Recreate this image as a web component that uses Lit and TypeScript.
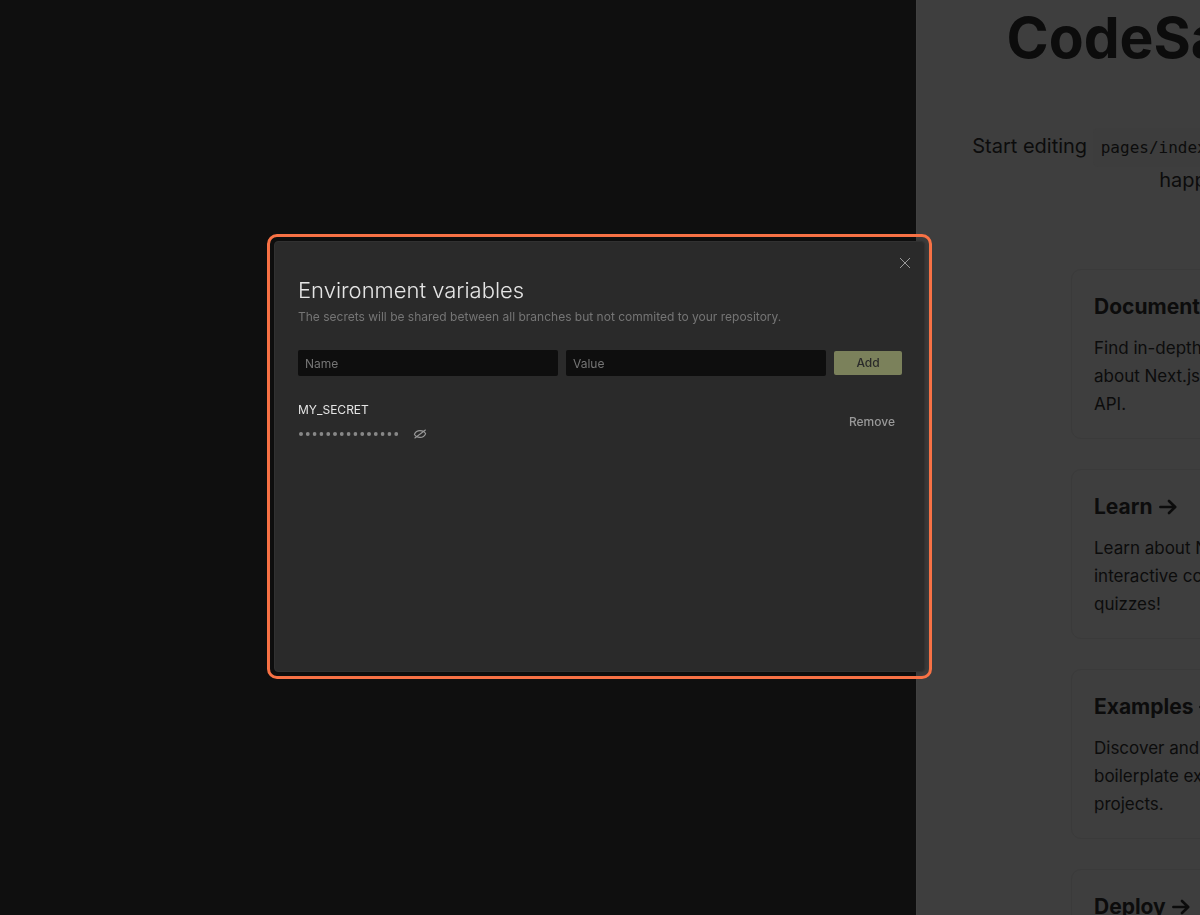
import { LitElement, html, css } from "lit";
import { customElement, state } from "lit/decorators.js";

const CARDS = [
  { title: "Documentation", text: "Find in-depth information about Next.js features and API." },
  { title: "Learn", text: "Learn about Next.js in an interactive course with quizzes!" },
  { title: "Examples", text: "Discover and deploy boilerplate example Next.js projects." },
  { title: "Deploy", text: "Instantly deploy your Next.js site to a public URL with Vercel." },
];

@customElement("preview-pane")
class PreviewPane extends LitElement {
  static styles = css`
    :host {
      display: block;
      overflow: hidden;
      background: #3e3e3e;
      color: #0c0c0c;
      border-left: 1px solid #414141;
      box-sizing: border-box;
      font-family: Inter, "Liberation Sans", sans-serif;
    }
    .content {
      min-width: 590px;
      box-sizing: border-box;
      padding: 4px 40px 0;
      display: flex;
      flex-direction: column;
      align-items: center;
    }
    h1 {
      margin: 0;
      font-size: 57px;
      line-height: 68px;
      font-weight: 700;
    }
    .lead {
      margin: 57px 0 60px;
      font-size: 20px;
      line-height: 34px;
      text-align: center;
      white-space: nowrap;
    }
    code {
      padding: 10px 8px;
      border-radius: 5px;
      background: #3d3d3d;
      font-family: "DejaVu Sans Mono", monospace;
      font-size: 16px;
      line-height: 20px;
    }
    .cards {
      display: flex;
      flex-direction: column;
      gap: 30px;
      padding-top: 12px;
    }
    .card {
      width: 282px;
      box-sizing: border-box;
      padding: 23px 22px 20px;
      border: 1px solid #3a3a3a;
      border-radius: 10px;
      color: inherit;
      text-decoration: none;
    }
    h2 {
      display: flex;
      align-items: center;
      gap: 6px;
      margin: 0 0 13px;
      font-size: 21px;
      line-height: 28px;
      font-weight: 700;
    }
    .arrow {
      width: 18px;
      height: 16px;
    }
    .card p {
      margin: 0;
      font-size: 17px;
      line-height: 28px;
    }
  `;

  render() {
    return html`
      <main class="content">
        <h1>CodeSandbox!</h1>
        <p class="lead">
          Start editing <code>pages/index.js</code> and make your magic<br />happening!
        </p>
        <div class="cards">
          ${CARDS.map(
            (card) => html`<a class="card" href="#">
              <h2>
                ${card.title}
                <svg class="arrow" viewBox="0 0 18 16" fill="none" stroke="currentColor" stroke-width="2.6" stroke-linecap="round" stroke-linejoin="round" aria-hidden="true">
                  <path d="M1.4 8H16M10 2L16.2 8L10 14" />
                </svg>
              </h2>
              <p>${card.text}</p>
            </a>`
          )}
        </div>
      </main>
    `;
  }
}

@customElement("env-dialog")
class EnvDialog extends LitElement {
  static styles = css`
    :host {
      display: block;
      width: 665px;
      max-width: 100%;
      box-sizing: border-box;
      padding: 4px;
      border: 3px solid #fa7346;
      border-radius: 10px;
      font-family: Inter, "Liberation Sans", sans-serif;
      font-size: 12px;
      line-height: 16px;
      color: #e5e5e5;
    }
    .dialog {
      position: relative;
      box-sizing: border-box;
      min-height: 431px;
      padding: 34px 22px 24px 23px;
      border: 1px solid #313131;
      border-radius: 4px;
      background: #2a2a2a;
      box-shadow: 0 0 6px rgba(0, 0, 0, 0.3);
    }
    button {
      font: inherit;
      border: 0;
      background: none;
      color: #999999;
      cursor: pointer;
    }
    .close {
      position: absolute;
      top: 11px;
      right: 9px;
      display: flex;
      padding: 4px;
    }
    .close svg {
      width: 12px;
      height: 12px;
    }
    h2 {
      margin: 0;
      font-size: 22px;
      line-height: 28px;
      font-weight: 300;
    }
    .hint {
      margin: 5px 0 25px;
      color: #757575;
    }
    form {
      display: grid;
      grid-template-columns: 1fr 1fr 68px;
      gap: 8px;
      align-items: center;
    }
    input {
      min-width: 0;
      height: 26px;
      box-sizing: border-box;
      padding: 0 7px;
      border: 0;
      border-radius: 2px;
      background: #0e0e0e;
      color: #e5e5e5;
      font: inherit;
    }
    input::placeholder {
      color: #757575;
      opacity: 1;
    }
    .add {
      height: 24px;
      padding: 0;
      border-radius: 2px;
      background: #7b815b;
      color: #2a2a2a;
      font-weight: 500;
    }
    .secret {
      display: flex;
      align-items: center;
      justify-content: space-between;
      margin-top: 26px;
    }
    .name {
      margin-bottom: 8px;
    }
    .value {
      display: flex;
      align-items: center;
      gap: 13px;
      height: 16px;
    }
    .dots {
      display: block;
      width: 102px;
      height: 6px;
      fill: #888888;
    }
    .toggle {
      display: flex;
      padding: 0;
    }
    .toggle svg {
      width: 14px;
      height: 12px;
    }
    .remove {
      padding: 4px 7px;
      font-weight: 500;
    }
  `;

  @state() private revealed = false;

  render() {
    return html`
      <section class="dialog" role="dialog" aria-labelledby="title">
        <button class="close" aria-label="Close">
          <svg viewBox="0 0 12 12" fill="none" stroke="currentColor" stroke-width="1" aria-hidden="true">
            <path d="M1 1L11 11M11 1L1 11" />
          </svg>
        </button>
        <h2 id="title">Environment variables</h2>
        <p class="hint">The secrets will be shared between all branches but not commited to your repository.</p>
        <form @submit=${(e: Event) => e.preventDefault()}>
          <input type="text" aria-label="Name" placeholder="Name" />
          <input type="text" aria-label="Value" placeholder="Value" />
          <button class="add" type="submit">Add</button>
        </form>
        <div class="secret">
          <div>
            <div class="name">MY_SECRET</div>
            <div class="value">
              <svg class="dots" viewBox="0 0 102 6" role="img" aria-label="Hidden value">
                ${Array.from({ length: 15 }, (_, i) => this.dot(3 + i * 6.8))}
              </svg>
              <button class="toggle" aria-label="Show value" @click=${() => (this.revealed = !this.revealed)}>
                <svg viewBox="0 0 14 12" fill="none" stroke="currentColor" stroke-width="1.1" stroke-linecap="round" aria-hidden="true">
                  <path d="M1.4 6.3C2.4 3.9 4.6 2.6 7 2.6S11.6 3.6 12.6 5.7C11.6 8.1 9.4 9.4 7 9.4S2.4 8.4 1.4 6.3Z" />
                  <path d="M1.9 10L12.4 2" />
                </svg>
              </button>
            </div>
          </div>
          <button class="remove">Remove</button>
        </div>
      </section>
    `;
  }

  private dot(x: number) {
    const size = 4;
    return html`<svg x=${x - size / 2} y="1" width=${size} height=${size} viewBox="0 0 4 4"><circle cx="2" cy="2" r="2" /></svg>`;
  }
}

@customElement("app-root")
class AppRoot extends LitElement {
  static styles = css`
    :host {
      display: block;
    }
    .workspace {
      display: grid;
      grid-template-columns: 916fr 284fr;
      height: 100vh;
      background: #0f0f0f;
      overflow: hidden;
    }
    preview-pane {
      min-width: 0;
    }
    .overlay {
      position: fixed;
      inset: 0;
      display: flex;
      align-items: center;
      justify-content: center;
      padding: 0 1px 2px 0;
    }
  `;

  render() {
    return html`
      <div class="workspace">
        <div></div>
        <preview-pane></preview-pane>
      </div>
      <div class="overlay"><env-dialog></env-dialog></div>
    `;
  }
}
